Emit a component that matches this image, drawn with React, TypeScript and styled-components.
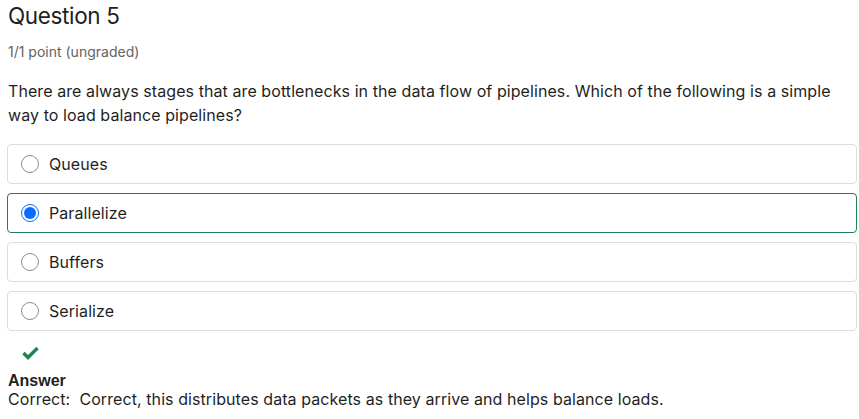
import React from 'react';
import styled, { createGlobalStyle } from 'styled-components';

const GlobalStyle = createGlobalStyle`
  body {
    margin: 0;
    background: #ffffff;
    font-family: Inter, "Noto Sans", sans-serif;
    color: #1f1f1f;
  }
`;

const Page = styled.div`
  padding: 0 2px 0 7px;
`;

const Title = styled.h2`
  margin: 0;
  padding: 3px 0 0 1px;
  font-size: 22.5px;
  font-weight: 400;
  letter-spacing: -0.35px;
  line-height: 26px;
  color: #1f1f1f;
`;

const Points = styled.div`
  margin-top: 14px;
  padding-left: 1px;
  font-size: 14px;
  line-height: 18px;
  color: #636363;
`;

const Prompt = styled.p`
  margin: 18px 0 0;
  padding-left: 1px;
  font-size: 16px;
  letter-spacing: 0.08px;
  line-height: 24px;
  color: #1f1f1f;
`;

const Options = styled.div`
  display: flex;
  flex-direction: column;
  gap: 9px;
  margin-top: 17px;
`;

const Option = styled.label<{ $selected?: boolean }>`
  display: flex;
  align-items: center;
  gap: 10px;
  height: 40px;
  box-sizing: border-box;
  padding: 0 0 0 13px;
  border: 1px solid ${p => (p.$selected ? '#1f8354' : '#dddddd')};
  border-radius: 4px;
  font-size: 16px;
  letter-spacing: 0.08px;
  color: #1f1f1f;
`;

const Radio = styled.span<{ $checked?: boolean }>`
  width: 18px;
  height: 18px;
  box-sizing: border-box;
  border-radius: 50%;
  border: 1px solid ${p => (p.$checked ? '#0a6cff' : '#8c8c8c')};
  display: flex;
  align-items: center;
  justify-content: center;
  flex: none;

  &::after {
    content: '';
    display: ${p => (p.$checked ? 'block' : 'none')};
    width: 12px;
    height: 12px;
    border-radius: 50%;
    background: #0a6cff;
  }
`;

const Feedback = styled.div`
  margin-top: 15px;
`;

const CheckIcon = styled.svg`
  display: block;
  margin-left: 15px;
  width: 17px;
  height: 14px;
`;

const AnswerLabel = styled.div`
  margin-top: 12px;
  padding-left: 1px;
  font-family: "Liberation Sans", Arial, sans-serif;
  font-weight: 700;
  font-size: 16px;
  line-height: 18px;
  color: #1f1f1f;
`;

const AnswerText = styled.div`
  padding-left: 1px;
  font-size: 16px;
  letter-spacing: 0.08px;
  line-height: 18px;
  color: #1f1f1f;
  white-space: pre;
`;

const options = ['Queues', 'Parallelize', 'Buffers', 'Serialize'];
const selected = 'Parallelize';

function App() {
  return (
    <>
      <GlobalStyle />
      <Page>
        <Title>Question 5</Title>
        <Points>1/1 point (ungraded)</Points>
        <Prompt>
          There are always stages that are bottlenecks in the data flow of pipelines. Which of the following is a simple way to load balance pipelines?
        </Prompt>
        <Options>
          {options.map(o => (
            <Option key={o} $selected={o === selected}>
              <Radio $checked={o === selected} />
              {o}
            </Option>
          ))}
        </Options>
        <Feedback>
          <CheckIcon viewBox="0 0 17 14">
            <path d="M1.5 7 L6 11.5 L15.5 2" fill="none" stroke="#1f8354" strokeWidth="3.4" />
          </CheckIcon>
          <AnswerLabel>Answer</AnswerLabel>
          <AnswerText>Correct:  Correct, this distributes data packets as they arrive and helps balance loads.</AnswerText>
        </Feedback>
      </Page>
    </>
  );
}

export default App;
